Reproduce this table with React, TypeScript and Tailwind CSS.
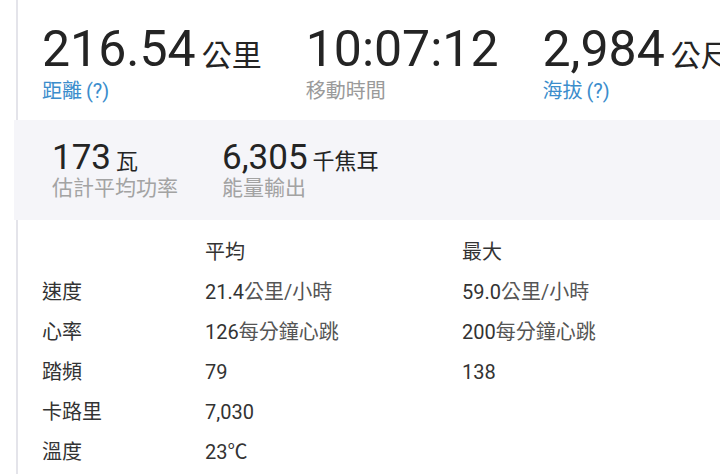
export default function App() {
  const topStats = [
    { value: '216.54', unit: '公里', label: '距離', help: true },
    { value: '10:07:12', unit: '', label: '移動時間', help: false },
    { value: '2,984', unit: '公尺', label: '海拔', help: true }
  ];

  const subStats = [
    { value: '173', unit: '瓦', label: '估計平均功率' },
    { value: '6,305', unit: '千焦耳', label: '能量輸出' }
  ];

  const rows = [
    { name: '速度', avg: '21.4', avgUnit: '公里/小時', max: '59.0', maxUnit: '公里/小時' },
    { name: '心率', avg: '126', avgUnit: '每分鐘心跳', max: '200', maxUnit: '每分鐘心跳' },
    { name: '踏頻', avg: '79', avgUnit: '', max: '138', maxUnit: '' },
    { name: '卡路里', avg: '7,030', avgUnit: '', max: '', maxUnit: '' },
    { name: '溫度', avg: '23℃', avgUnit: '', max: '', maxUnit: '' }
  ];

  return (
    <div className="h-[474px] w-[720px] overflow-hidden bg-white font-['Roboto','Noto_Sans_CJK_TC',sans-serif] text-[#333]">
      <div className="ml-4 min-h-full border-l-2 border-[#e4e4ea]">
        {/* Top stats */}
        <div className="flex gap-[44px] whitespace-nowrap pl-6 pt-[19px]">
          {topStats.map((s) => (
            <div key={s.label} className="shrink-0">
              <div className="flex h-[60px] items-baseline text-[#242424]">
                <span className="text-[50px] leading-[60px]">{s.value}</span>
                {s.unit && <span className="ml-[6px] text-[30px] leading-none">{s.unit}</span>}
              </div>
              <div className={`text-[20px] leading-6 ${s.help ? 'text-[#3b8dcc]' : 'text-[#9a9a9a]'}`}>
                {s.label}
                {s.help && <span className="ml-1">(?)</span>}
              </div>
            </div>
          ))}
        </div>

        {/* Secondary stats */}
        <div className="-ml-[4px] mt-[17px] flex h-[100px] gap-[44px] bg-[#f5f5f9] pl-[38px] pt-5 whitespace-nowrap">
          {subStats.map((s) => (
            <div key={s.label}>
              <div className="flex h-9 items-baseline text-[#242424]">
                <span className="text-[35px] leading-9">{s.value}</span>
                <span className="ml-[5px] text-[22px] leading-none">{s.unit}</span>
              </div>
              <div className="text-[21px] leading-6 text-[#a3a3a3]">{s.label}</div>
            </div>
          ))}
        </div>

        {/* Averages table */}
        <div className="grid grid-cols-[163px_257px_1fr] pl-6 pt-3 text-[20px] leading-[40px]">
          <div />
          <div>平均</div>
          <div>最大</div>
          {rows.map((r) => (
            <div key={r.name} className="contents">
              <div>{r.name}</div>
              <div>
                {r.avg}
                <span className="text-[#555]">{r.avgUnit}</span>
              </div>
              <div>
                {r.max}
                <span className="text-[#555]">{r.maxUnit}</span>
              </div>
            </div>
          ))}
        </div>
      </div>
    </div>
  );
}
